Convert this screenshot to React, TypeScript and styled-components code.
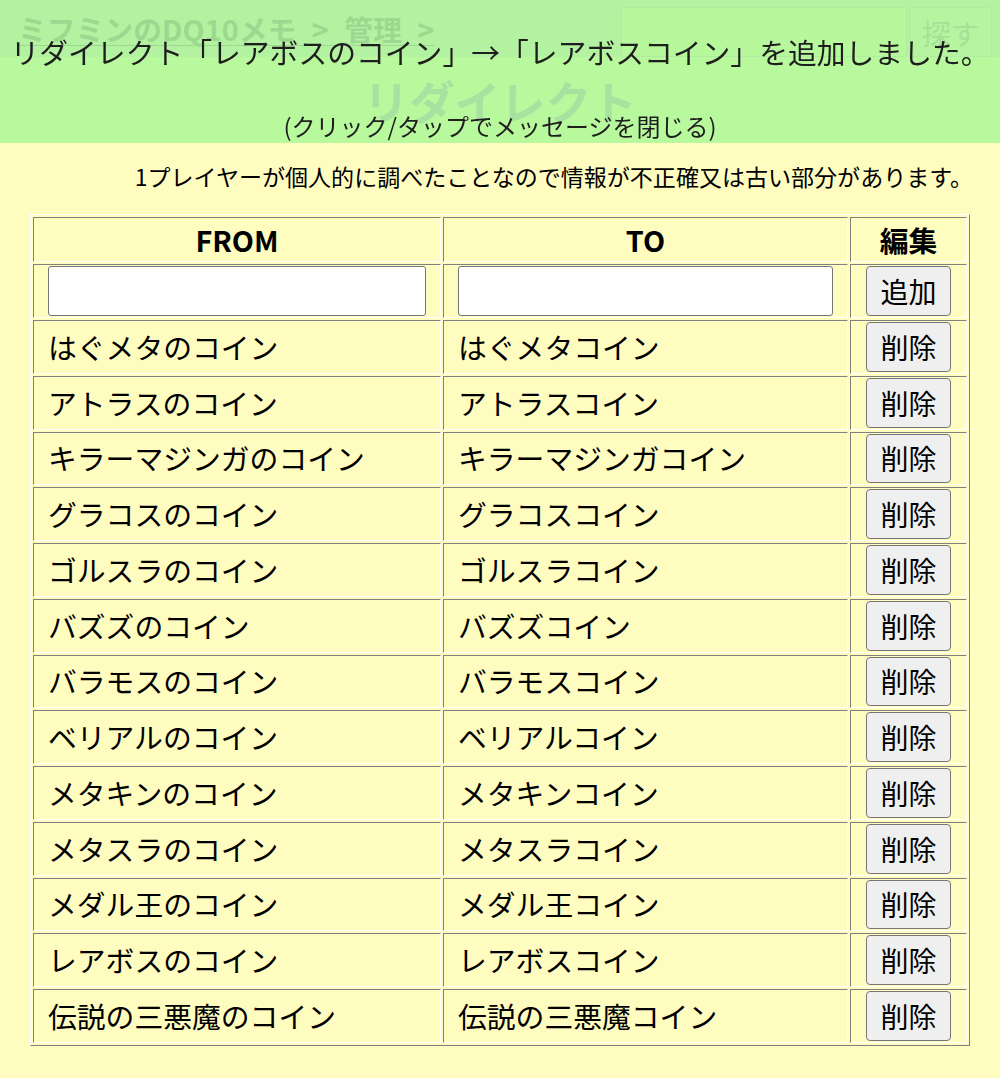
import React, { useState } from "react";
import styled, { createGlobalStyle } from "styled-components";

const GlobalStyle = createGlobalStyle`
  * { box-sizing: border-box; }
  html, body {
    margin: 0;
    padding: 0;
    background: #fffcc0;
    font-family: "Noto Sans CJK JP", "Noto Sans", sans-serif;
    color: #000;
  }
`;

const Page = styled.div`
  min-height: 1078px;
  background: #fffcc0;
  padding-bottom: 30px;
`;

const HeaderBar = styled.header`
  height: 57px;
  background: #efeec8;
  display: flex;
  align-items: flex-start;
  justify-content: space-between;
  padding: 0 8px 0 18px;
`;

const Breadcrumb = styled.div`
  font-size: 28.8px;
  font-weight: bold;
  line-height: 40px;
  margin-top: 9px;
  color: #c3b4a5;
  text-decoration: underline;
  text-decoration-thickness: 1px;
  text-underline-offset: 4px;
  white-space: pre;
  word-spacing: 9px;
`;

const SearchForm = styled.form`
  display: flex;
  gap: 2px;
  margin-top: 7px;
`;

const SearchInput = styled.input`
  width: 286px;
  height: 50px;
  border: 1px solid #e6e3c6;
  border-radius: 3px;
  background: #fcfac2;
`;

const SearchButton = styled.button`
  width: 83px;
  height: 50px;
  border: 1px solid #e6e3c6;
  border-radius: 3px;
  background: #f6f4c6;
  color: #d0c8b8;
  font-family: inherit;
  font-size: 28.8px;
  padding: 0;
`;

const Title = styled.h1`
  margin: 11px 0 0;
  font-size: 45.5px;
  line-height: 64px;
  font-weight: bold;
  text-align: center;
  color: #d9cbc8;
`;

const Notice = styled.p`
  margin: 28px 0 0;
  font-size: 23.04px;
  line-height: 33px;
  text-align: right;
  padding-right: 27px;
`;

const Table = styled.table`
  margin: 21px auto 0;
  width: 940px;
  table-layout: fixed;
  border-collapse: separate;
  border-spacing: 2px;
  border: 1px solid;
  border-color: #ffffff #808080 #808080 #ffffff;
`;

const Th = styled.th<{ $w: number }>`
  width: ${(p) => p.$w}px;
  font-size: 28.8px;
  line-height: 41px;
  font-weight: bold;
  padding: 1px;
  text-align: center;
  border: 1px solid;
  border-color: #808080 #ffffff #ffffff #808080;
`;

const Td = styled.td<{ $center?: boolean }>`
  font-size: 28.8px;
  line-height: 40px;
  padding: 1px 14px;
  vertical-align: middle;
  text-align: ${(p) => (p.$center ? "center" : "left")};
  white-space: nowrap;
  border: 1px solid;
  border-color: #808080 #ffffff #ffffff #808080;
`;

const TextInput = styled.input`
  display: block;
  width: 100%;
  height: 50px;
  background: #fff;
  border: 1px solid #767676;
  border-radius: 3px;
  font-family: inherit;
  font-size: 28.8px;
  padding: 0 6px;
`;

const ActionButton = styled.button`
  height: 49.75px;
  padding: 0 13px;
  border: 1px solid #767676;
  border-radius: 4px;
  background: #efefef;
  color: #000;
  font-family: inherit;
  font-size: 28px;
  line-height: 40px;
  vertical-align: middle;
`;

const Overlay = styled.div`
  position: fixed;
  top: 0;
  left: 0;
  right: 0;
  height: 143px;
  background: rgba(128, 245, 127, 0.55);
  color: #1e1e1e;
  text-align: center;
  padding-top: 32px;
  cursor: pointer;
`;

const MessageMain = styled.div`
  font-size: 28.8px;
  line-height: 40px;
  white-space: nowrap;
`;

const MessageSub = styled.div`
  margin-top: 37px;
  font-size: 24px;
  line-height: 34px;
`;

const rows: [string, string][] = [
  ["はぐメタのコイン", "はぐメタコイン"],
  ["アトラスのコイン", "アトラスコイン"],
  ["キラーマジンガのコイン", "キラーマジンガコイン"],
  ["グラコスのコイン", "グラコスコイン"],
  ["ゴルスラのコイン", "ゴルスラコイン"],
  ["バズズのコイン", "バズズコイン"],
  ["バラモスのコイン", "バラモスコイン"],
  ["ベリアルのコイン", "ベリアルコイン"],
  ["メタキンのコイン", "メタキンコイン"],
  ["メタスラのコイン", "メタスラコイン"],
  ["メダル王のコイン", "メダル王コイン"],
  ["レアボスのコイン", "レアボスコイン"],
  ["伝説の三悪魔のコイン", "伝説の三悪魔コイン"],
];

export default function App() {
  const [showMsg, setShowMsg] = useState(true);
  return (
    <Page>
      <GlobalStyle />
      <HeaderBar>
        <Breadcrumb>ミフミンのDQ10メモ &gt; 管理 &gt;</Breadcrumb>
        <SearchForm onSubmit={(e) => e.preventDefault()}>
          <SearchInput type="text" />
          <SearchButton type="submit">探す</SearchButton>
        </SearchForm>
      </HeaderBar>
      <Title>リダイレクト</Title>
      <Notice>1プレイヤーが個人的に調べたことなので情報が不正確又は古い部分があります。</Notice>
      <Table>
        <thead>
          <tr>
            <Th $w={408}>FROM</Th>
            <Th $w={405}>TO</Th>
            <Th $w={117}>編集</Th>
          </tr>
        </thead>
        <tbody>
          <tr>
            <Td>
              <TextInput type="text" />
            </Td>
            <Td>
              <TextInput type="text" />
            </Td>
            <Td $center>
              <ActionButton type="button">追加</ActionButton>
            </Td>
          </tr>
          {rows.map(([from, to]) => (
            <tr key={from}>
              <Td>{from}</Td>
              <Td>{to}</Td>
              <Td $center>
                <ActionButton type="button">削除</ActionButton>
              </Td>
            </tr>
          ))}
        </tbody>
      </Table>
      {showMsg && (
        <Overlay onClick={() => setShowMsg(false)}>
          <MessageMain>リダイレクト「レアボスのコイン」→「レアボスコイン」を追加しました。</MessageMain>
          <MessageSub>(クリック/タップでメッセージを閉じる)</MessageSub>
        </Overlay>
      )}
    </Page>
  );
}
